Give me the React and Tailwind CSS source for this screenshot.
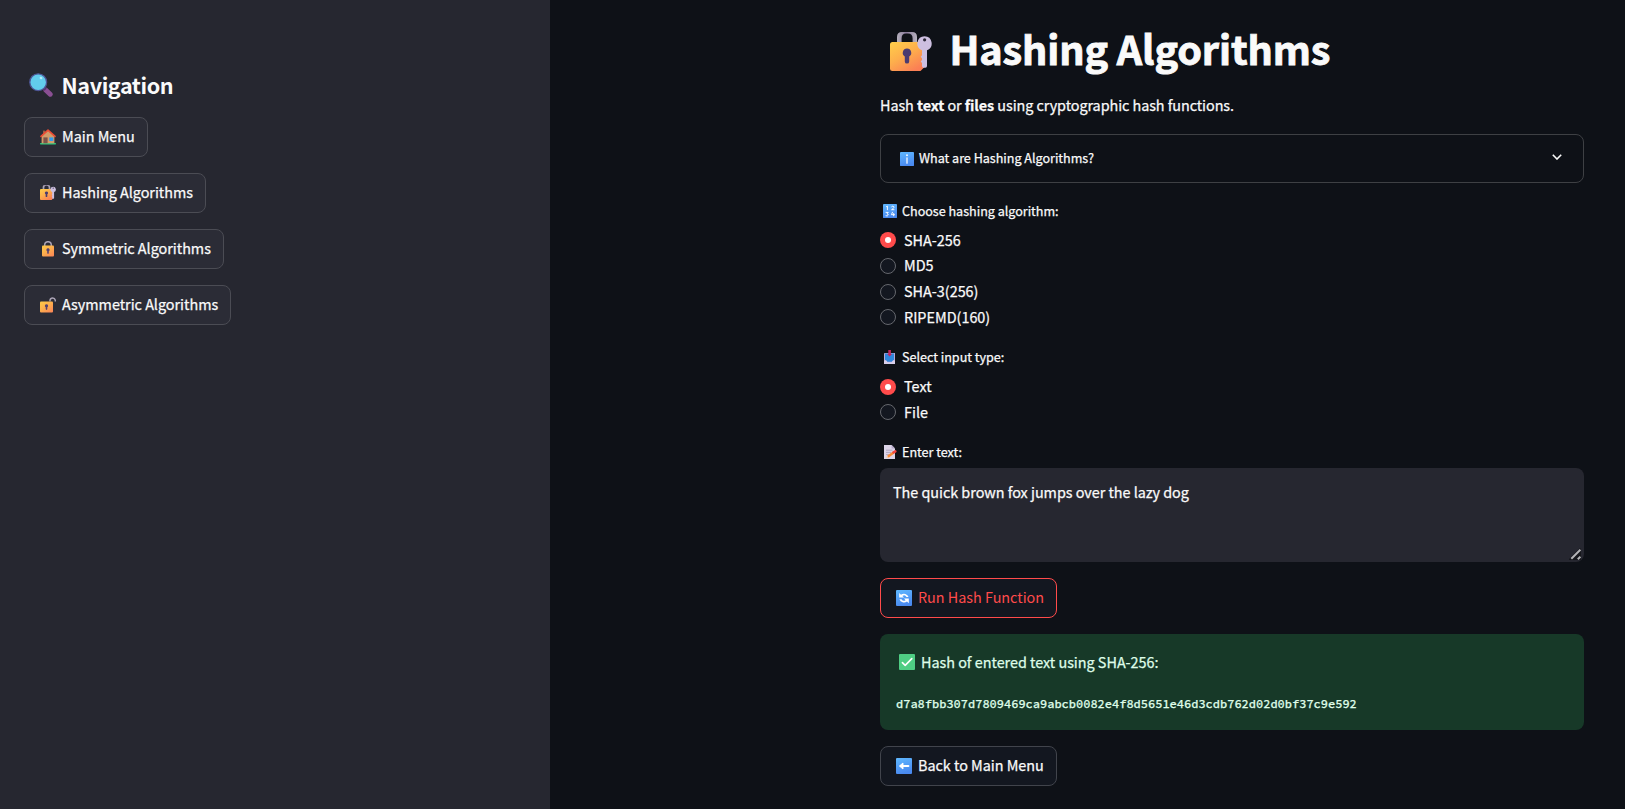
import { useId, useState } from "react";

/* ---------- Emoji drawings ---------- */

function LockKeyIcon({ className }) {
  const id = useId();
  return (
    <svg viewBox="0 0 42 39" className={className} aria-hidden="true">
      <defs>
        <linearGradient id={id} x1="0" y1="0" x2="0.7" y2="1">
          <stop offset="0" stopColor="#ffce4a" />
          <stop offset="0.5" stopColor="#fdaf4c" />
          <stop offset="1" stopColor="#fb7f55" />
        </linearGradient>
        <linearGradient id={id + "s"} x1="0" y1="0" x2="1" y2="0">
          <stop offset="0" stopColor="#b5b1bd" />
          <stop offset="0.45" stopColor="#8b7b9c" />
          <stop offset="1" stopColor="#b5b1bd" />
        </linearGradient>
      </defs>
      <path d="M7 12V5Q7 0 12 0H22Q27 0 27 5V12H22.6V6.5Q22.6 1.6 18 1.6H16Q11.6 1.6 11.6 6.5V12Z" fill={"url(#" + id + "s)"} />
      <path d="M2.5 10H31.5Q34 10 34 12.5V35.5L30.5 39H2.5Q0 39 0 36.5V12.5Q0 10 2.5 10Z" fill={"url(#" + id + ")"} />
      <path d="M17 16.6a4.2 4.2 0 0 0-2.2 7.8v5a2.2 2.2 0 0 0 4.4 0v-5A4.2 4.2 0 0 0 17 16.6Z" fill="#4b3b70" />
      <path d="M34.6 4.2a7.3 7.3 0 0 0-2.6 14.1v5l-1.3 1.4 1.3 1.5v1.8l-1.3 1.4 1.3 1.5v3.2q0 1.6 1.6 1.6h1.8q1.6 0 1.6-1.6V18.3A7.3 7.3 0 0 0 34.6 4.2Z" fill="#cdbfe0" />
      <circle cx="34.6" cy="7.8" r="1.6" fill="#2b2536" />
    </svg>
  );
}

function LockIcon({ className, open = false }) {
  const id = useId();
  return (
    <svg viewBox="0 0 16 16" className={className} aria-hidden="true">
      <defs>
        <linearGradient id={id} x1="0" y1="0" x2="0.8" y2="1">
          <stop offset="0" stopColor="#ffcb48" />
          <stop offset="0.5" stopColor="#fdb04c" />
          <stop offset="1" stopColor="#fb8a56" />
        </linearGradient>
      </defs>
      {open ? (
        <path d="M10 4.4V3.2a2.7 2.7 0 0 1 5.3 0V4.6" fill="none" stroke="#aaa3b5" strokeWidth="1.5" />
      ) : (
        <path d="M4.7 6V4a3.3 3.3 0 0 1 6.6 0V6" fill="none" stroke="#aaa3b5" strokeWidth="1.5" />
      )}
      <rect x={open ? 0 : 2} y="4.4" width={open ? 13 : 12} height="11" rx="1" fill={"url(#" + id + ")"} />
      <path
        d={open ? "M6.5 7.3a1.6 1.6 0 0 0-.8 3v1.8a.8.8 0 0 0 1.6 0v-1.8a1.6 1.6 0 0 0-.8-3Z" : "M8 7.3a1.6 1.6 0 0 0-.8 3v1.8a.8.8 0 0 0 1.6 0v-1.8a1.6 1.6 0 0 0-.8-3Z"}
        fill="#55416f"
      />
    </svg>
  );
}

function HouseIcon({ className }) {
  return (
    <svg viewBox="0 0 16 16" className={className} aria-hidden="true">
      <rect x="0" y="14" width="16" height="1.4" rx=".6" fill="#2fc47c" />
      <rect x="3" y="1.6" width="2.2" height="4.4" fill="#9a5b45" />
      <path d="M1.6 7.4L8 1.6L14.4 7.4V14.2H1.6Z" fill="#d29b6a" />
      <rect x="3.4" y="8.4" width="4.2" height="5.8" fill="#7d5148" />
      <rect x="9.3" y="8.4" width="4" height="3.6" fill="#2f9cf0" />
      <path d="M1 7.4L8 1.1L15 7.4" fill="none" stroke="#ee4c35" strokeWidth="1.6" strokeLinecap="round" strokeLinejoin="round" />
    </svg>
  );
}

function MagnifierIcon({ className }) {
  return (
    <svg viewBox="0 0 24 24" className={className} aria-hidden="true">
      <path d="M17 17.2L21.2 21.2" stroke="#8a4f93" strokeWidth="5" strokeLinecap="round" />
      <path d="M14.6 14.6L16.6 16.6" stroke="#54336b" strokeWidth="3" />
      <circle cx="9.2" cy="9.2" r="8.4" fill="#62ccec" stroke="#4e5596" strokeWidth="1.3" />
      <ellipse cx="12" cy="5" rx="1.5" ry="1.1" transform="rotate(35 12 5)" fill="#b5ecfb" />
    </svg>
  );
}

function BlueTile({ className, children }) {
  const id = useId();
  return (
    <svg viewBox="0 0 16 16" className={className} aria-hidden="true">
      <defs>
        <linearGradient id={id} x1="0" y1="0" x2="0.3" y2="1">
          <stop offset="0" stopColor="#5fb8ff" />
          <stop offset="1" stopColor="#4a8af0" />
        </linearGradient>
      </defs>
      <rect width="16" height="16" rx="1" fill={"url(#" + id + ")"} />
      {children}
    </svg>
  );
}

function InfoIcon({ className }) {
  return (
    <BlueTile className={className}>
      <path d="M8 6.6V12.8" stroke="#fff" strokeWidth="1.4" strokeLinecap="round" />
      <circle cx="8" cy="3.7" r="1.05" fill="#fff" />
    </BlueTile>
  );
}

function NumbersIcon({ className }) {
  return (
    <BlueTile className={className}>
      <g fill="none" stroke="#fff" strokeWidth="1.1">
        <path d="M3.6 3.2L5 2.4V7" />
        <path d="M9.6 3.4Q10.2 2.4 11.4 2.5Q12.9 2.8 12.4 4.2Q12 5.2 9.8 6.5H13" />
        <path d="M3 9.6H6L4.6 11.2Q6.2 11.4 6 12.6Q5.4 14.2 3 13.4" />
        <path d="M11 9L9.6 12.2H13.6M12.2 10.4V14" />
      </g>
    </BlueTile>
  );
}

function RefreshIcon({ className }) {
  return (
    <BlueTile className={className}>
      <path d="M3.2 7.6V3L5 4.7A4.9 4.9 0 0 1 12.6 7H10.5A2.9 2.9 0 0 0 6.4 6L8 7.6Z" fill="#fff" />
      <path d="M12.8 8.6V13.2L11 11.5A4.9 4.9 0 0 1 3.4 9.2H5.5A2.9 2.9 0 0 0 9.6 10.2L8 8.6Z" fill="#fff" />
    </BlueTile>
  );
}

function LeftArrowIcon({ className }) {
  return (
    <BlueTile className={className}>
      <path d="M5 8H12.4" stroke="#fff" strokeWidth="1.9" strokeLinecap="round" />
      <path d="M3.4 8L7 5V11Z" fill="#fff" stroke="#fff" strokeWidth=".9" strokeLinejoin="round" />
    </BlueTile>
  );
}

function CheckIcon({ className }) {
  return (
    <svg viewBox="0 0 16 16" className={className} aria-hidden="true">
      <rect width="16" height="16" rx="1" fill="#4fce84" />
      <path d="M3.4 8.6L6.2 11.4L12.8 4.6" fill="none" stroke="#fff" strokeWidth="1.6" strokeLinecap="round" strokeLinejoin="round" />
    </svg>
  );
}

function InboxIcon({ className }) {
  return (
    <svg viewBox="0 0 14 14" className={className} aria-hidden="true">
      <path d="M1.4 3H12V13.4H1V3.4Z" fill="#b9a8d6" />
      <path d="M2 3.6H11V9.2L9 11.8H4.2L2 9.2Z" fill="#2f86dd" />
      <path d="M1 10.6H3.2L4.6 12.2H8.6L10 10.6H12V14H1Z" fill="#d8cfea" />
      <path d="M5.3 0H7.9V4H9L6.6 6.6L4.2 4H5.3Z" fill="#c4265e" />
    </svg>
  );
}

function MemoIcon({ className }) {
  return (
    <svg viewBox="0 0 14 14" className={className} aria-hidden="true">
      <path d="M1 0H8.6L12 3.4V14H1Z" fill="#dcd4e8" />
      <path d="M8.6 0L12 3.4H8.6Z" fill="#b5a8c9" />
      <path d="M3 5.2H9.5M3 7.4H8M3 9.6H6" stroke="#a79cb8" strokeWidth=".8" />
      <path d="M4.8 11.8L10.6 7.4" stroke="#f98a35" strokeWidth="2.5" />
      <path d="M10.6 7.4L12.3 6.4" stroke="#f0443f" strokeWidth="2.6" strokeLinecap="round" />
      <path d="M3.2 13.2L3.8 10.9L5.5 12.8Z" fill="#f7cfa4" />
    </svg>
  );
}

/* ---------- Controls ---------- */

function NavButton({ icon, label, className }) {
  return (
    <button className={"flex h-10 items-center gap-1.5 rounded-lg border border-[#4b4c54] bg-[#2b2c36] pl-[15px] " + className}>
      {icon}
      <span className="pb-[2px] text-[14.4px] leading-6 tracking-[-0.02px] whitespace-nowrap">{label}</span>
    </button>
  );
}

function FieldLabel({ icon, children, className }) {
  return (
    <div className={"flex h-5 items-center gap-[5px] pl-[3px] text-[12.6px] leading-5 tracking-[-0.02px] " + className}>
      {icon}
      <span>{children}</span>
    </div>
  );
}

function RadioList({ name, options, className }) {
  const [selected, setSelected] = useState(options[0]);
  return (
    <div className={"flex flex-col " + className} role="radiogroup" aria-label={name}>
      {options.map((option) => (
        <div
          key={option}
          role="radio"
          aria-checked={option === selected}
          onClick={() => setSelected(option)}
          className="flex h-[25.6px] cursor-pointer items-center gap-2"
        >
          {option === selected ? (
            <span className="flex size-4 items-center justify-center rounded-full bg-[#ff4b4b]">
              <span className="size-1.5 rounded-full bg-white" />
            </span>
          ) : (
            <span className="size-4 rounded-full border border-[#65676d] bg-[#131720]" />
          )}
          <span className="pb-[1.2px] text-[14.4px] leading-6">{option}</span>
        </div>
      ))}
    </div>
  );
}

export default function App() {
  return (
    <div className="flex h-[809px] w-full overflow-hidden bg-[#0e1117] font-['Noto_Sans_CJK_SC',sans-serif] text-[#fafafa] [-webkit-text-stroke:0.25px]">
      <aside className="flex w-[550px] shrink-0 flex-col bg-[#262730] px-6 pt-[73px]">
        <h2 className="flex h-6 items-center gap-[9px] pl-[4.5px]">
          <MagnifierIcon className="size-6" />
          <span className="text-[21.6px] leading-6 font-bold tracking-[-0.4px] [-webkit-text-stroke:0px]">Navigation</span>
        </h2>
        <nav className="mt-5 flex flex-col gap-4">
          <NavButton className="w-[124px]" label="Main Menu" icon={<HouseIcon className="size-4" />} />
          <NavButton className="w-[182px]" label="Hashing Algorithms" icon={<LockKeyIcon className="mb-px h-[15px] w-4" />} />
          <NavButton className="w-[200px]" label="Symmetric Algorithms" icon={<LockIcon className="size-4" />} />
          <NavButton className="w-[207px]" label="Asymmetric Algorithms" icon={<LockIcon open className="size-4" />} />
        </nav>
      </aside>

      <main className="flex flex-1 flex-col pt-5 pl-[330px]">
        <div className="flex w-[704px] flex-col">
          <h1 className="flex h-[55px] items-center gap-[17.5px] pl-[10px]">
            <LockKeyIcon className="mt-2 h-[39px] w-[42px]" />
            <span className="text-[39.6px] leading-[55px] font-bold tracking-[-0.12px] [-webkit-text-stroke:0.9px]">Hashing Algorithms</span>
          </h1>
          <p className="mt-[18px] text-[14.4px] leading-6 tracking-[-0.07px]">
            Hash <strong className="font-bold">text</strong> or <strong className="font-bold">files</strong> using cryptographic hash functions.
          </p>

          <div className="mt-[17px] flex h-[49px] items-center rounded-lg border border-[#3e4044] pr-[21px] pl-[19px]">
            <InfoIcon className="size-3.5" />
            <span className="ml-[5px] pb-px text-[12.6px] leading-5 tracking-[-0.02px]">What are Hashing Algorithms?</span>
            <svg viewBox="0 0 10 6" className="mb-[3px] ml-auto h-1.5 w-2.5" aria-hidden="true">
              <path d="M0.8 0.8L5 5L9.2 0.8" fill="none" stroke="#fafafa" strokeWidth="1.6" />
            </svg>
          </div>

          <FieldLabel className="mt-[18px]" icon={<NumbersIcon className="size-3.5" />}>
            Choose hashing algorithm:
          </FieldLabel>
          <RadioList className="mt-[6.6px]" name="Hashing algorithm" options={["SHA-256", "MD5", "SHA-3(256)", "RIPEMD(160)"]} />

          <FieldLabel className="mt-[17px]" icon={<InboxIcon className="size-3.5" />}>
            Select input type:
          </FieldLabel>
          <RadioList className="mt-[6.8px]" name="Input type" options={["Text", "File"]} />

          <FieldLabel className="mt-[17px]" icon={<MemoIcon className="size-3.5" />}>
            Enter text:
          </FieldLabel>
          <div className="mt-1.5 flex h-[94px] justify-between rounded-lg bg-[#262730] pt-3 pl-[13px] text-[14.4px] leading-6">
            <span className="tracking-[-0.03px]">The quick brown fox jumps over the lazy dog</span>
            <svg viewBox="0 0 12 12" className="mr-[3px] mb-[2px] size-3 self-end" aria-hidden="true">
              <path d="M0 11L10.5 0.5H12V12H0Z" fill="#16171c" />
              <path d="M2.3 10.8L11.4 1.7M8.8 11.2L11.4 8.6" stroke="#b4b4b7" strokeWidth="2" />
            </svg>
          </div>

          <button className="mt-4 flex h-10 w-[177px] items-center gap-1.5 rounded-lg border border-[#ff4b4b] bg-[#131720] pl-[15px] text-[#ff4b4b] [-webkit-text-stroke:0px]">
            <RefreshIcon className="size-4" />
            <span className="pb-px text-[14.4px] leading-6 tracking-[-0.02px]">Run Hash Function</span>
          </button>

          <div className="mt-4 flex h-24 flex-col rounded-lg bg-[#173928] px-4 pt-4 text-[#dffde9]">
            <div className="flex items-center gap-1.5 pl-[3px] text-[14.4px] leading-6">
              <CheckIcon className="size-4" />
              <span className="tracking-[-0.02px]">Hash of entered text using SHA-256:</span>
            </div>
            <code className="mt-[18px] font-['Source_Code_Pro','Liberation_Mono',monospace] text-[12px] leading-6 font-medium">
              d7a8fbb307d7809469ca9abcb0082e4f8d5651e46d3cdb762d02d0bf37c9e592
            </code>
          </div>

          <button className="mt-4 flex h-10 w-[177px] items-center gap-1.5 rounded-lg border border-[#41444c] bg-[#131720] pl-[15px]">
            <LeftArrowIcon className="size-4" />
            <span className="pb-px text-[14.4px] leading-6 tracking-[-0.02px]">Back to Main Menu</span>
          </button>
        </div>
      </main>
    </div>
  );
}
